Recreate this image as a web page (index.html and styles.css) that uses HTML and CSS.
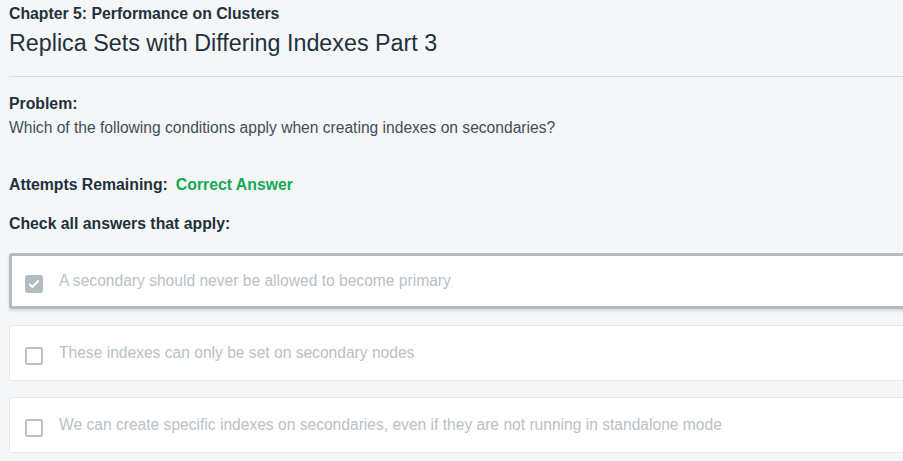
FILE: index.html
```html
<!DOCTYPE html>
<html>
<head>
<meta charset="utf-8">
<link rel="stylesheet" href="styles.css">
</head>
<body>
<div class="page">
  <div class="chapter">Chapter 5: Performance on Clusters</div>
  <h1 class="title">Replica Sets with Differing Indexes Part 3</h1>
  <hr class="divider">
  <div class="label problem">Problem:</div>
  <p class="question">Which of the following conditions apply when creating indexes on secondaries?</p>
  <div class="attempts"><span class="label">Attempts Remaining:</span><span class="correct">Correct Answer</span></div>
  <div class="label check-label">Check all answers that apply:</div>
  <div class="answers">
    <div class="answer selected">
      <span class="box checked"><svg width="12" height="10" viewBox="0 0 12 10"><path d="M1.3 5 L4.4 8 L10.6 1.6" fill="none" stroke="#fff" stroke-width="2.2"/></svg></span>
      <span class="text">A secondary should never be allowed to become primary</span>
    </div>
    <div class="answer">
      <span class="box"></span>
      <span class="text">These indexes can only be set on secondary nodes</span>
    </div>
    <div class="answer">
      <span class="box"></span>
      <span class="text">We can create specific indexes on secondaries, even if they are not running in standalone mode</span>
    </div>
  </div>
</div>
</body>
</html>
```
FILE: styles.css
```css
html, body {
  margin: 0;
  padding: 0;
  background: #f5f6f7;
  overflow: hidden;
}
body {
  font-family: "Liberation Sans", Arial, sans-serif;
  color: #21313c;
}
.page {
  width: 960px;
  padding: 4px 0 0 9px;
}
.chapter {
  font-size: 15.8px;
  font-weight: bold;
  line-height: 20px;
}
.title {
  font-size: 23.3px;
  font-weight: normal;
  line-height: 30px;
  margin: 4px 0 0;
  color: #21313c;
}
.divider {
  border: 0;
  border-top: 1px solid #cfe0df;
  margin: 18px 0 0;
}
.label {
  font-size: 15.8px;
  font-weight: bold;
  line-height: 20px;
}
.problem {
  margin-top: 17px;
}
.question {
  font-size: 15.6px;
  line-height: 20px;
  margin: 4px 0 0;
  color: #3d4f58;
}
.attempts {
  margin-top: 37px;
  display: flex;
  gap: 8px;
}
.correct {
  font-size: 15.8px;
  font-weight: bold;
  line-height: 20px;
  color: #13aa52;
}
.check-label {
  margin-top: 19px;
}
.answers {
  margin-top: 19px;
  display: flex;
  flex-direction: column;
  gap: 16px;
}
.answer {
  background: #fff;
  border: 1px solid #e7eaec;
  border-radius: 3px;
  height: 56px;
  box-sizing: border-box;
  display: flex;
  align-items: center;
  padding-left: 15px;
}
.answer.selected {
  border: 3px solid #b2bcc1;
  padding-left: 13px;
  box-shadow: 0 2px 3px rgba(0,0,0,0.12);
}
.box {
  width: 18px;
  height: 18px;
  box-sizing: border-box;
  border: 2px solid #b8c1c6;
  border-radius: 3px;
  display: flex;
  align-items: center;
  justify-content: center;
  margin-top: 5px;
}
.box.checked {
  background: #b2bcc1;
  border-color: #b2bcc1;
  margin-top: 6px;
}
.text {
  font-size: 15.6px;
  line-height: 20px;
  color: #b8c1c6;
  margin-left: 16px;
}
```
